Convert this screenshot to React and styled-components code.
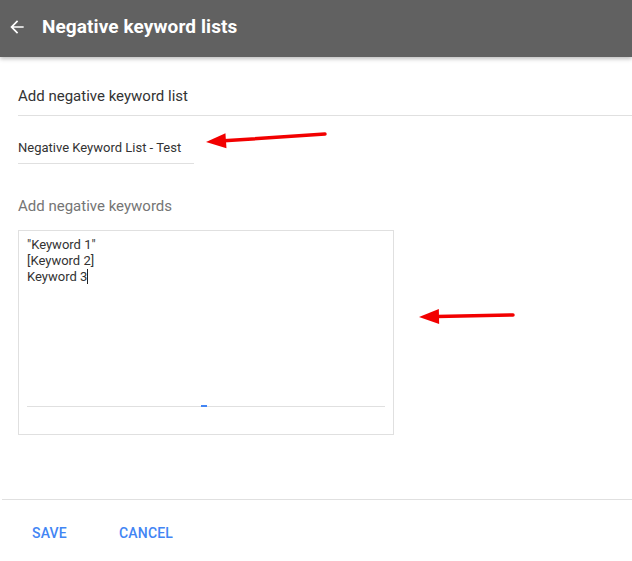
import React from "react";
import styled, { createGlobalStyle } from "styled-components";

const GlobalStyle = createGlobalStyle`
  html, body {
    margin: 0;
    padding: 0;
    background: #fff;
    font-family: Roboto, "Liberation Sans", Arial, sans-serif;
  }
`;

const Page = styled.div`
  position: relative;
  width: 632px;
  height: 561px;
  overflow: hidden;
  background: #fff;
`;

const Header = styled.header`
  height: 57px;
  background: #616161;
  display: flex;
  align-items: center;
  padding-left: 7px;
  gap: 15px;
  box-shadow: 0 2px 4px rgba(0, 0, 0, 0.25);
  position: relative;
  z-index: 1;
`;

const Title = styled.h1`
  margin: 0;
  color: #fff;
  font-size: 19px;
  font-weight: 700;
  letter-spacing: 0.1px;
  padding-bottom: 4px;
`;

const Body = styled.div`
  padding-left: 18px;
`;

const SectionTitle = styled.div`
  margin-top: 29px;
  padding-bottom: 9px;
  font-size: 15px;
  line-height: 20px;
  color: #333;
  border-bottom: 1px solid #e0e0e0;
`;

const NameInput = styled.div`
  margin-top: 24px;
  width: 176px;
  padding-bottom: 7px;
  font-size: 13px;
  line-height: 16px;
  color: #333;
  border-bottom: 1px solid #e0e0e0;
`;

const FieldLabel = styled.div`
  margin-top: 32px;
  font-size: 15px;
  line-height: 20px;
  color: #757575;
`;

const TextBox = styled.div`
  margin-top: 14px;
  width: 358px;
  height: 203px;
  border: 1px solid #e0e0e0;
  display: flex;
  flex-direction: column;
  padding: 0 8px;
`;

const Lines = styled.div`
  padding-top: 6px;
  font-size: 13px;
  line-height: 16px;
  color: #333;
  flex: 1;
`;

const Caret = styled.span`
  display: inline-block;
  width: 1px;
  height: 15px;
  background: #222;
  vertical-align: -3px;
`;

const Underline = styled.div`
  height: 1px;
  background: #e0e0e0;
  margin-bottom: 27px;
  display: flex;
  justify-content: center;
`;

const Focus = styled.div`
  width: 6px;
  height: 2px;
  background: #4285f4;
  margin-top: -1px;
  margin-right: 4px;
`;

const Footer = styled.div`
  margin-top: 64px;
  border-top: 1px solid #e0e0e0;
  margin-left: 2px;
  display: flex;
  gap: 52px;
  padding: 25px 0 0 30px;
`;

const TextButton = styled.button`
  background: none;
  border: none;
  padding: 0;
  font-family: inherit;
  font-size: 14px;
  font-weight: 500;
  line-height: 16px;
  color: #4285f4;
  text-transform: uppercase;
  letter-spacing: 0.2px;
  cursor: pointer;
`;

const Annotation = styled.svg`
  position: absolute;
  left: 0;
  top: 0;
  pointer-events: none;
`;

const BackArrow = () => (
  <svg width="20" height="20" viewBox="0 0 24 24" style={{ marginBottom: 4 }}>
    <path d="M20 11H7.83l5.59-5.59L12 4l-8 8 8 8 1.41-1.41L7.83 13H20v-2z" fill="#fff" />
  </svg>
);

const RedArrow = ({ x1, y1, x2, y2 }) => {
  const ang = Math.atan2(y2 - y1, x2 - x1);
  const len = 20;
  const half = 7.5;
  const bx = x2 - len * Math.cos(ang);
  const by = y2 - len * Math.sin(ang);
  const px = -Math.sin(ang) * half;
  const py = Math.cos(ang) * half;
  return (
    <g>
      <line x1={x1} y1={y1} x2={bx + 2 * Math.cos(ang)} y2={by + 2 * Math.sin(ang)} stroke="#f20000" strokeWidth="3.5" strokeLinecap="round" />
      <polygon points={`${x2},${y2} ${bx + px},${by + py} ${bx - px},${by - py}`} fill="#f20000" />
    </g>
  );
};

export default function App() {
  return (
    <Page>
      <GlobalStyle />
      <Header>
        <BackArrow />
        <Title>Negative keyword lists</Title>
      </Header>
      <Body>
        <SectionTitle>Add negative keyword list</SectionTitle>
        <NameInput>Negative Keyword List - Test</NameInput>
        <FieldLabel>Add negative keywords</FieldLabel>
        <TextBox>
          <Lines>
            "Keyword 1"
            <br />
            [Keyword 2]
            <br />
            Keyword 3<Caret />
          </Lines>
          <Underline>
            <Focus />
          </Underline>
        </TextBox>
      </Body>
      <Footer>
        <TextButton>Save</TextButton>
        <TextButton>Cancel</TextButton>
      </Footer>
      <Annotation width="632" height="561">
        <RedArrow x1={325} y1={134} x2={206} y2={142} />
        <RedArrow x1={513} y1={315} x2={419} y2={317} />
      </Annotation>
    </Page>
  );
}
